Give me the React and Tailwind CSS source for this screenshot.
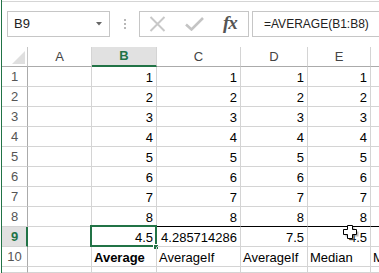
import React from "react";

const cols = [
  { key: "A", w: "w-[64px]" },
  { key: "B", w: "w-[65px]" },
  { key: "C", w: "w-[84px]" },
  { key: "D", w: "w-[67px]" },
  { key: "E", w: "w-[63px]" },
  { key: "F", w: "w-[64px]", hidden: true },
];

const rows = [1, 2, 3, 4, 5, 6, 7, 8].map((n) => ({
  n,
  cells: { B: n, C: n, D: n, E: n },
}));
rows.push({ n: 9, cells: { B: "4.5", C: "4.285714286", D: "7.5", E: "4.5" } });
rows.push({
  n: 10,
  cells: { B: "Average", C: "AverageIf", D: "AverageIf", E: "Median", F: "M" },
  text: true,
});
// row 11 is only a sliver at the bottom edge, its number is below the fold
rows.push({ n: 11, cells: {}, noLabel: true });

function FxBar() {
  return (
    <div className="flex h-[26px] mt-[9px] items-stretch">
      <div className="ml-[5px] w-[103px] border border-[#c6c6c6] flex items-center justify-between pl-[6px] pr-[7px]">
        <span className="text-[13px] text-[#222]">B9</span>
        <svg width="6" height="4" viewBox="0 0 6 4">
          <path d="M0 0 L6 0 L3 3.5 Z" fill="#666" />
        </svg>
      </div>
      <div className="w-[29px] flex flex-col items-center justify-center gap-[2px] pl-px">
        <span className="w-[2px] h-[2px] bg-[#b8b8b8]" />
        <span className="w-[2px] h-[2px] bg-[#b8b8b8]" />
        <span className="w-[2px] h-[2px] bg-[#b8b8b8]" />
      </div>
      <div className="w-[110px] border border-[#c6c6c6] flex items-center">
        <svg className="ml-[9px]" width="17" height="16" viewBox="0 0 17 16">
          <path d="M1.5 1 L15.5 15 M15.5 1 L1.5 15" stroke="#c8c8c8" strokeWidth="2" />
        </svg>
        <svg className="ml-[19px]" width="19" height="14" viewBox="0 0 19 14">
          <path d="M1 7.5 L6.5 12.5 L18 1" stroke="#c4c4c4" strokeWidth="2.6" fill="none" />
        </svg>
        <span className="ml-[19px] -mt-[2px] font-['Liberation_Serif',serif] italic font-bold text-[19px] text-[#555] tracking-[-1px]">
          fx
        </span>
      </div>
      <div className="ml-[3px] flex-1 border border-r-0 border-[#c6c6c6] flex items-center pl-[11px]">
        <span className="text-[12px] text-[#222]">=AVERAGE(B1:B8)</span>
      </div>
    </div>
  );
}

function HeaderRow() {
  return (
    <div className="flex h-[20px] mt-[10px]">
      <div className="w-[26px] shrink-0 border-r border-b border-[#ababab] border-r-[#c6c6c6] flex items-end justify-end pr-[2px] pb-[2px]">
        <svg width="13" height="13" viewBox="0 0 13 13">
          <path d="M13 0 L13 13 L0 13 Z" fill="#dfdfdf" />
        </svg>
      </div>
      {cols.map((c) => {
        const sel = c.key === "B";
        return (
          <div
            key={c.key}
            className={
              c.w +
              " shrink-0 flex items-center justify-center text-[13px] border-r border-[#d4d4d4] " +
              (sel
                ? "bg-[#e1e1e1] border-b-2 border-b-[#217346] text-[#217346] font-bold"
                : "border-b border-b-[#ababab] text-[#444]")
            }
          >
            {c.hidden ? "" : c.key}
          </div>
        );
      })}
    </div>
  );
}

function Row({ row }) {
  const sel = row.n === 9;
  return (
    <div className="flex h-[20px]">
      <div
        className={
          "w-[26px] shrink-0 flex items-center justify-center text-[13px] leading-[20px] border-b border-[#d4d4d4] " +
          (sel
            ? "bg-[#e1e1e1] border-r-2 border-r-[#217346] text-[#217346] font-bold pl-px"
            : "border-r border-r-[#ababab] text-[#555]")
        }
      >
        {row.noLabel ? "" : row.n}
      </div>
      {cols.map((c) => {
        const v = row.cells[c.key];
        const black = row.n === 8 && c.key !== "A" && c.key !== "B";
        const isSel = sel && c.key === "B";
        return (
          <div
            key={c.key}
            className={
              c.w +
              " shrink-0 relative border-r border-[#d4d4d4] text-[13px] leading-[21px] whitespace-nowrap text-black " +
              (black ? "border-b border-b-black " : "border-b ") +
              (row.text ? "text-left pl-[2px] " : "text-right pr-[3px] ") +
              (row.text && c.key === "B" ? "font-bold" : "")
            }
          >
            {v}
            {isSel && (
              <>
                <div className="absolute left-[-2px] top-[-2px] right-[-1px] bottom-[-1px] border-2 border-[#217346]" />
                <div className="absolute right-[-3px] bottom-[-4px] w-[6px] h-[6px] bg-[#217346] border border-white" />
              </>
            )}
          </div>
        );
      })}
    </div>
  );
}

function Cursor() {
  return (
    <svg
      className="absolute left-[343px] top-[225px]"
      width="16"
      height="16"
      viewBox="0 0 16 16"
    >
      <path
        d="M5.5 1.5 H10.5 V5.5 H14.5 V10.5 H10.5 V14.5 H5.5 V10.5 H1.5 V5.5 H5.5 Z"
        fill="#777"
        transform="translate(1 1)"
        opacity="0.5"
      />
      <path
        d="M5.5 1.5 H10.5 V5.5 H14.5 V10.5 H10.5 V14.5 H5.5 V10.5 H1.5 V5.5 H5.5 Z"
        fill="#fff"
        stroke="#000"
        strokeWidth="1"
        transform="translate(-1 -1)"
      />
    </svg>
  );
}

export default function App() {
  return (
    <div className="relative w-[379px] h-[273px] overflow-hidden bg-white pl-px font-['Liberation_Sans',Arial,sans-serif]">
      <div className="h-full border-l border-[#217346] flex flex-col">
        <div className="mt-px border-t border-[#d5d5d5]" />
        <FxBar />
        <HeaderRow />
        {rows.map((r) => (
          <Row key={r.n} row={r} />
        ))}
      </div>
      <Cursor />
    </div>
  );
}
